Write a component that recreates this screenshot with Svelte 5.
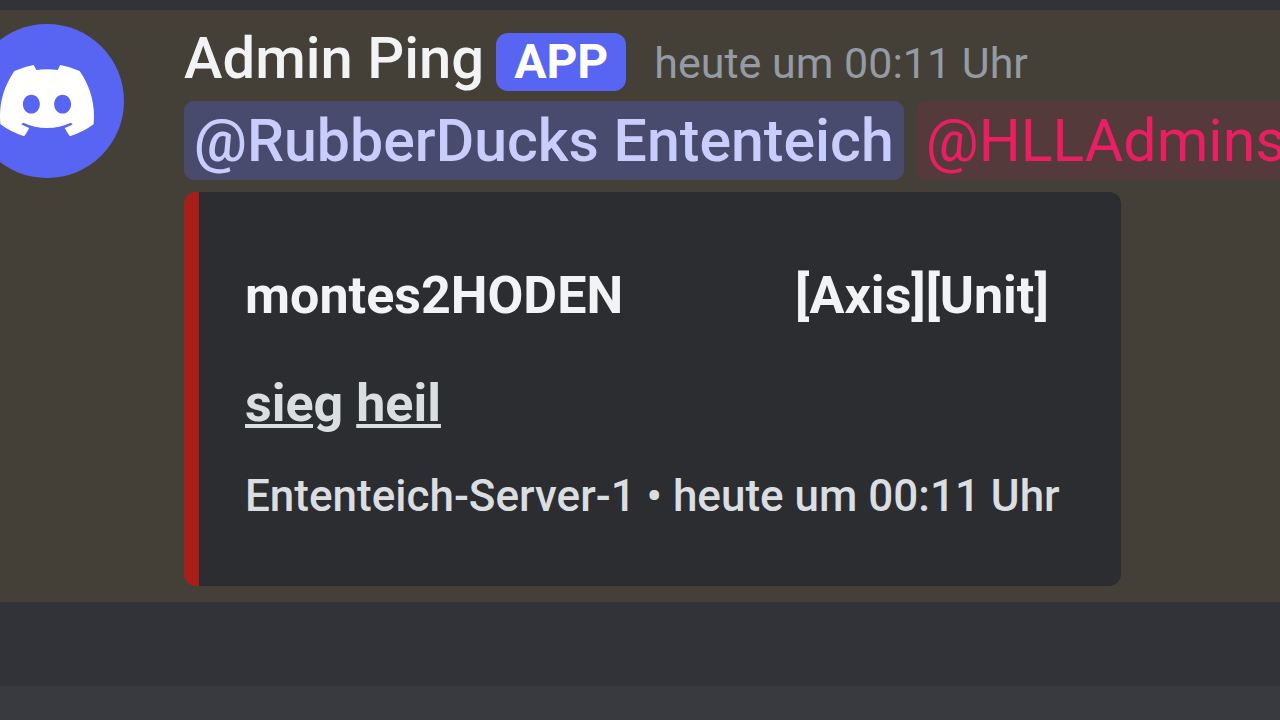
<script>
  let author = 'Admin Ping';
  let sentAt = 'heute um 00:11 Uhr';

  let mentions = [
    { name: '@RubberDucks Ententeich', kind: 'default' },
    { name: '@HLLAdmins', kind: 'admins' }
  ];

  let report = {
    player: 'montes2HODEN',
    tags: '[Axis][Unit]',
    words: ['sieg', 'heil'],
    server: 'Ententeich-Server-1'
  };
</script>

<main>
  <article class="message">
    <div class="avatar">
      <svg viewBox="0 0 127.14 96.36" aria-hidden="true">
        <path d="M107.7,8.07A105.15,105.15,0,0,0,81.47,0a72.06,72.06,0,0,0-3.36,6.83A97.68,97.68,0,0,0,49,6.83,72.37,72.37,0,0,0,45.64,0,105.89,105.89,0,0,0,19.39,8.09C2.79,32.65-1.71,56.6.54,80.21h0A105.73,105.73,0,0,0,32.71,96.36,77.7,77.7,0,0,0,39.6,85.25a68.42,68.42,0,0,1-10.85-5.18c.91-.66,1.8-1.34,2.66-2a75.57,75.57,0,0,0,64.32,0c.87.71,1.76,1.39,2.66,2a68.68,68.68,0,0,1-10.87,5.19,77,77,0,0,0,6.89,11.1A105.25,105.25,0,0,0,126.6,80.22h0C129.24,52.84,122.09,29.11,107.7,8.07ZM42.45,65.69C36.18,65.69,31,60,31,53s5-12.74,11.43-12.74S54,46,53.89,53,48.84,65.69,42.45,65.69Zm42.24,0C78.41,65.69,73.25,60,73.25,53s5-12.74,11.44-12.74S96.23,46,96.12,53,91.08,65.69,84.69,65.69Z" />
      </svg>
    </div>

    <div class="content">
      <header>
        <span class="author">{author}</span>
        <span class="badge">APP</span>
        <time>{sentAt}</time>
      </header>

      <div class="mentions">
        {#each mentions as mention}
          <span class="mention {mention.kind}">{mention.name}</span>
        {/each}
      </div>

      <section class="embed">
        <h2>
          <span>{report.player}</span>
          <span>{report.tags}</span>
        </h2>
        <p class="words">
          {#each report.words as word}
            <u>{word}</u>{' '}
          {/each}
        </p>
        <footer>{report.server} • {sentAt}</footer>
      </section>
    </div>
  </article>

  <div class="composer"></div>
</main>

<style>
  :global(body) {
    margin: 0;
    background: #313338;
  }

  main {
    display: flex;
    flex-direction: column;
    box-sizing: border-box;
    min-height: 100vh;
    padding-top: 10px;
    overflow: hidden;
    background: #313338;
    font-family: Roboto, "Noto Sans", sans-serif;
    white-space: nowrap;
  }

  .message {
    display: flex;
    gap: 60px;
    padding: 14px 0 16px;
    background: #444037;
  }

  .avatar {
    display: flex;
    flex: none;
    align-items: center;
    justify-content: center;
    width: 154px;
    height: 154px;
    margin-left: -30px;
    border-radius: 50%;
    background: #5865f2;
  }

  .avatar svg {
    width: 94px;
    fill: #ffffff;
  }

  .content {
    flex: 1;
    min-width: 0;
  }

  header {
    display: flex;
    align-items: baseline;
    height: 77px;
    line-height: 68px;
  }

  .author {
    color: #f2f3f5;
    font-size: 58px;
    font-weight: 500;
  }

  .badge {
    margin-left: 12px;
    padding: 0 18px;
    border-radius: 12px;
    background: #5865f2;
    color: #ffffff;
    font-size: 48px;
    font-weight: 700;
    line-height: 58px;
  }

  time {
    margin-left: 28px;
    color: #949ba4;
    font-size: 43px;
  }

  .mentions {
    display: flex;
    gap: 12px;
    margin-bottom: 12px;
  }

  .mention {
    padding: 0 10px;
    border-radius: 10px;
    font-size: 59px;
    line-height: 79px;
  }

  .mention.default {
    background: #494b6e;
    color: #c9cdfb;
    font-weight: 500;
  }

  .mention.admins {
    background: #553a3b;
    color: #e91e63;
  }

  .embed {
    box-sizing: border-box;
    width: fit-content;
    padding: 72px 61px 58px 46px;
    border-left: 15px solid #a81f1a;
    border-radius: 12px;
    background: #2b2d31;
  }

  h2 {
    display: flex;
    gap: 172px;
    margin: 0;
    color: #f2f3f5;
    font-size: 52px;
    font-weight: 700;
    line-height: 64px;
  }

  .words {
    margin: 44px 0 28px;
    color: #dbdee1;
    font-size: 52px;
    font-weight: 700;
    line-height: 64px;
  }

  .words u {
    text-decoration-thickness: 4px;
    text-underline-offset: 3px;
  }

  footer {
    color: #dbdee1;
    font-size: 44px;
    font-weight: 500;
    line-height: 64px;
  }

  .composer {
    flex: none;
    height: 34px;
    margin-top: auto;
    background: #383a40;
  }
</style>
